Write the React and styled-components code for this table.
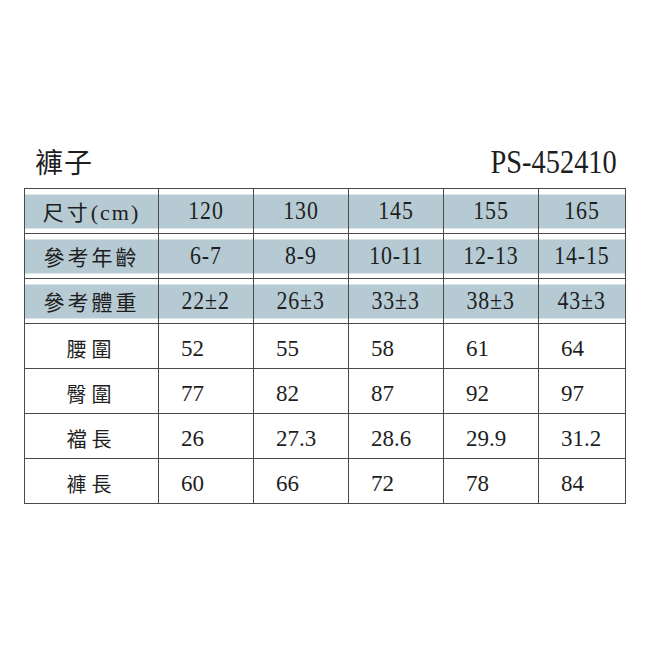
import styled, { createGlobalStyle } from 'styled-components';

const GlobalStyle = createGlobalStyle`
  html, body {
    margin: 0;
    padding: 0;
    background: #ffffff;
  }
  body {
    font-family: "Liberation Serif", "Noto Sans CJK TC", serif;
    color: #1e1e1e;
  }
`;

const Page = styled.div`
  width: 650px;
  height: 650px;
  box-sizing: border-box;
  padding: 142px 0 0 24px;
`;

const Sheet = styled.div`
  width: 601px;
`;

const TitleBar = styled.div`
  display: flex;
  justify-content: space-between;
  align-items: baseline;
  height: 46px;
  padding: 2px 8px 0 11px;
  box-sizing: border-box;
`;

const Title = styled.h1`
  margin: 0;
  font-family: "Noto Sans CJK TC", sans-serif;
  font-weight: 400;
  font-size: 28px;
  line-height: 34px;
  letter-spacing: 1px;
`;

const Code = styled.span`
  display: inline-block;
  font-size: 33px;
  line-height: 34px;
  transform: scaleX(0.86);
  transform-origin: right center;
`;

const Table = styled.table`
  width: 601px;
  border-collapse: collapse;
  table-layout: fixed;
  border: 1px solid #7a7a7a;
`;

const Row = styled.tr`
  height: 45px;
`;

const band = 'linear-gradient(#ffffff 0 5px, #b5cad3 5px calc(100% - 5px), #ffffff calc(100% - 5px))';

const Cell = styled.td`
  padding: ${(p) => (p.$head ? '0' : '5px 0 0 22px')};
  border: 1px solid #4a4a4a;
  text-align: ${(p) => (p.$head ? 'center' : 'left')};
  vertical-align: middle;
  font-size: ${(p) => (p.$head ? '26px' : '23px')};
  white-space: nowrap;
  background: ${(p) => (p.$band ? band : '#ffffff')};
`;

const Label = styled.td`
  padding: ${(p) => (p.$band ? '0' : '4px 0 0')};
  border: 1px solid #4a4a4a;
  text-align: center;
  vertical-align: middle;
  font-family: "Noto Sans CJK TC", sans-serif;
  font-size: ${(p) => (p.$band ? '21px' : '20px')};
  letter-spacing: ${(p) => (p.$band ? '3px' : '5px')};
  white-space: nowrap;
  background: ${(p) => (p.$band ? band : '#ffffff')};
`;

const Unit = styled.span`
  font-family: "Liberation Serif", serif;
  font-size: 22px;
  letter-spacing: 2px;
`;

const Num = styled.span`
  display: inline-block;
  letter-spacing: 1px;
  transform: scaleX(0.84);
`;

const Col = styled.col`
  width: ${(p) => p.$w}px;
`;

const headRows = [
  { label: <>尺寸<Unit>(cm)</Unit></>, values: ['120', '130', '145', '155', '165'] },
  { label: '參考年齡', values: ['6-7', '8-9', '10-11', '12-13', '14-15'] },
  { label: '參考體重', values: ['22±2', '26±3', '33±3', '38±3', '43±3'] },
];

const bodyRows = [
  { label: '腰圍', values: ['52', '55', '58', '61', '64'] },
  { label: '臀圍', values: ['77', '82', '87', '92', '97'] },
  { label: '襠長', values: ['26', '27.3', '28.6', '29.9', '31.2'] },
  { label: '褲長', values: ['60', '66', '72', '78', '84'] },
];

export default function App() {
  return (
    <Page>
      <GlobalStyle />
      <Sheet>
        <TitleBar>
          <Title>褲子</Title>
          <Code>PS-452410</Code>
        </TitleBar>
        <Table>
          <colgroup>
            <Col $w={134} />
            <Col $w={95} />
            <Col $w={95} />
            <Col $w={95} />
            <Col $w={95} />
            <Col $w={87} />
          </colgroup>
          <tbody>
            {headRows.map((r, i) => (
              <Row key={'h' + i}>
                <Label $band>{r.label}</Label>
                {r.values.map((v) => (
                  <Cell key={v} $head $band>
                    <Num>{v}</Num>
                  </Cell>
                ))}
              </Row>
            ))}
            {bodyRows.map((r, i) => (
              <Row key={'b' + i}>
                <Label>{r.label}</Label>
                {r.values.map((v) => (
                  <Cell key={v}>{v}</Cell>
                ))}
              </Row>
            ))}
          </tbody>
        </Table>
      </Sheet>
    </Page>
  );
}
